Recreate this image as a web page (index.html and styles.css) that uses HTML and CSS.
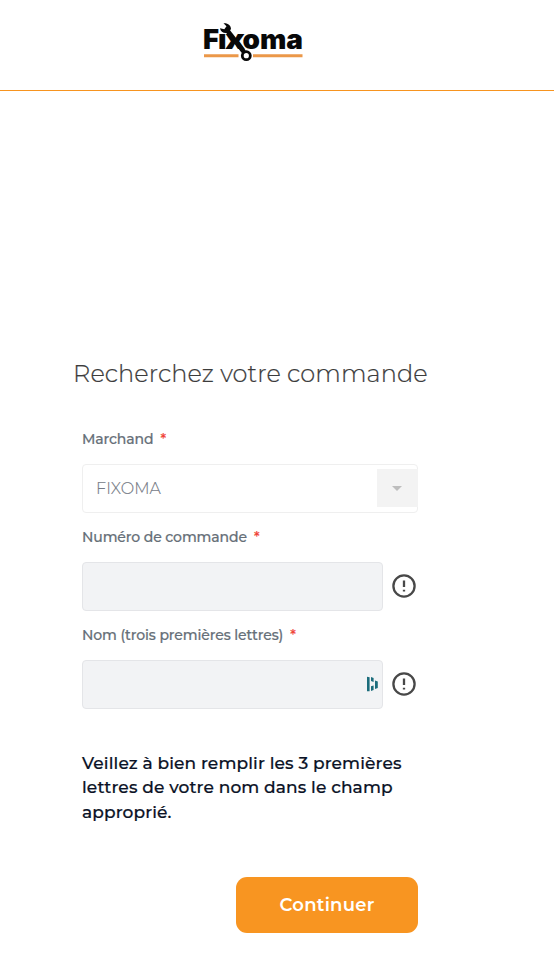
FILE: index.html
```html
<!DOCTYPE html>
<html lang="fr">
<head>
<meta charset="utf-8">
<title>Fixoma</title>
<link rel="stylesheet" href="styles.css">
</head>
<body>
<header class="header">
  <svg class="logo" width="104" height="44" viewBox="0 0 104 44" role="img" aria-label="Fixoma">
    <g class="logo-text">
      <text x="1" y="29" textLength="16" lengthAdjust="spacingAndGlyphs">F</text>
      <text x="16" y="29" textLength="8.5" lengthAdjust="spacingAndGlyphs">ı</text>
      <text x="23" y="29" textLength="20" lengthAdjust="spacingAndGlyphs">x</text>
      <text x="40.5" y="29" textLength="60.5" lengthAdjust="spacingAndGlyphs">oma</text>
    </g>
    <path d="M2 35.8H36.5M51 35.8H100.500" stroke="#eb9849" stroke-width="3"/>
    <path d="M24.500 9.500L42 32" stroke="#080808" stroke-width="4.500"/>
    <path d="M21.500 3.200L24.500 6.200L22.300 9.300L18 8.200C18.500 12 22.500 14 26.500 12.500L29 9C29 5.500 26 2.800 21.500 3.200Z" fill="#080808"/>
    <circle cx="44.300" cy="35.700" r="4" fill="#fff" stroke="#080808" stroke-width="2.800"/>
  </svg>
</header>
<main class="content">
  <h1 class="title">Recherchez votre commande</h1>
  <form class="form">
    <div class="label"><span>Marchand</span><span class="required">*</span></div>
    <div class="select"><span class="select-value">FIXOMA</span><span class="select-arrow"></span></div>
    <div class="label"><span>Numéro de commande</span><span class="required">*</span></div>
    <div class="row">
      <div class="field"></div>
      <svg class="info" width="24" height="24" viewBox="0 0 24 24"><circle cx="12" cy="12" r="10.600"/><path d="M12 6.500v6.500M12 15.700v1.700"/></svg>
    </div>
    <div class="label"><span>Nom (trois premières lettres)</span><span class="required">*</span></div>
    <div class="row">
      <div class="field">
        <svg class="key" width="12" height="16" viewBox="0 0 12 16" fill="#1b6c7b"><path d="M0 .7L2.600 1.300V15.200H0ZM4 1L6.600 2V6L4 5ZM4 10.200L6.600 9.500V14L4 15ZM8 4.500L10.800 5.500V12L8 13Z"/></svg>
      </div>
      <svg class="info" width="24" height="24" viewBox="0 0 24 24"><circle cx="12" cy="12" r="10.600"/><path d="M12 6.500v6.500M12 15.700v1.700"/></svg>
    </div>
    <p class="note">Veillez à bien remplir les 3 premières<br>lettres de votre nom dans le champ<br>approprié.</p>
    <button class="submit" type="button">Continuer</button>
  </form>
</main>
</body>
</html>
```
FILE: styles.css
```css
* { box-sizing: border-box; }
body { margin: 0; background: #fff; font-family: Montserrat, Inter, sans-serif; }
.header { height: 91px; padding: 20px 0 0 202px; border-bottom: 1px solid #f7941f; }
.logo { display: block; }
.logo-text { font-family: Inter, sans-serif; font-size: 27px; font-weight: 900; fill: #080808; }
.content { padding: 267px 0 0 82px; }
.title { margin: 0 0 0 -9px; height: 32px; font-size: 24px; line-height: 32px; font-weight: 300; color: #3c3c3c; -webkit-text-stroke: .2px currentColor; white-space: nowrap; letter-spacing: .1px; }
.form { width: 336px; padding-top: 25px; }
.label { height: 49px; display: flex; gap: 7px; font-size: 14px; line-height: 48px; font-weight: 500; color: #666f78; -webkit-text-stroke: .2px currentColor; white-space: nowrap; letter-spacing: -.1px; }
.required { color: #f04438; }
.select { height: 49px; display: flex; justify-content: space-between; align-items: flex-start; padding: 4px 0 0 13px; border: 1px solid #efefef; border-radius: 4px; }
.select-value { font-size: 16px; line-height: 39px; font-weight: 300; color: #757a85; -webkit-text-stroke: .15px currentColor; letter-spacing: .1px; }
.select-arrow { width: 41px; height: 38px; display: grid; place-items: center; background: #f3f3f3; margin-right: -1px; padding-right: 2px; }
.select-arrow::before { content: ""; border: 5px solid transparent; border-top-color: #bdbdbd; border-bottom: 0; }
.row { display: flex; align-items: center; gap: 9px; }
.field { width: 301px; height: 49px; display: flex; align-items: center; justify-content: flex-end; padding-right: 3px; background: #f2f3f5; border: 1px solid #e4e5e8; border-radius: 4px; }
.info { fill: none; stroke: #484848; stroke-width: 2.3; margin-bottom: 2px; }
.key { margin-bottom: 1px; }
.note { margin: 42px 0 0; font-size: 17px; line-height: 24.4px; font-weight: 500; color: #0b1226; -webkit-text-stroke: .2px currentColor; white-space: nowrap; letter-spacing: .12px; }
.submit { display: block; width: 182px; height: 56px; margin: 53px 0 0 auto; padding: 0; border: 0; border-radius: 11px; background: #f89521; color: #fff; font: 600 18px Montserrat, Inter, sans-serif; letter-spacing: .25px; }
```
